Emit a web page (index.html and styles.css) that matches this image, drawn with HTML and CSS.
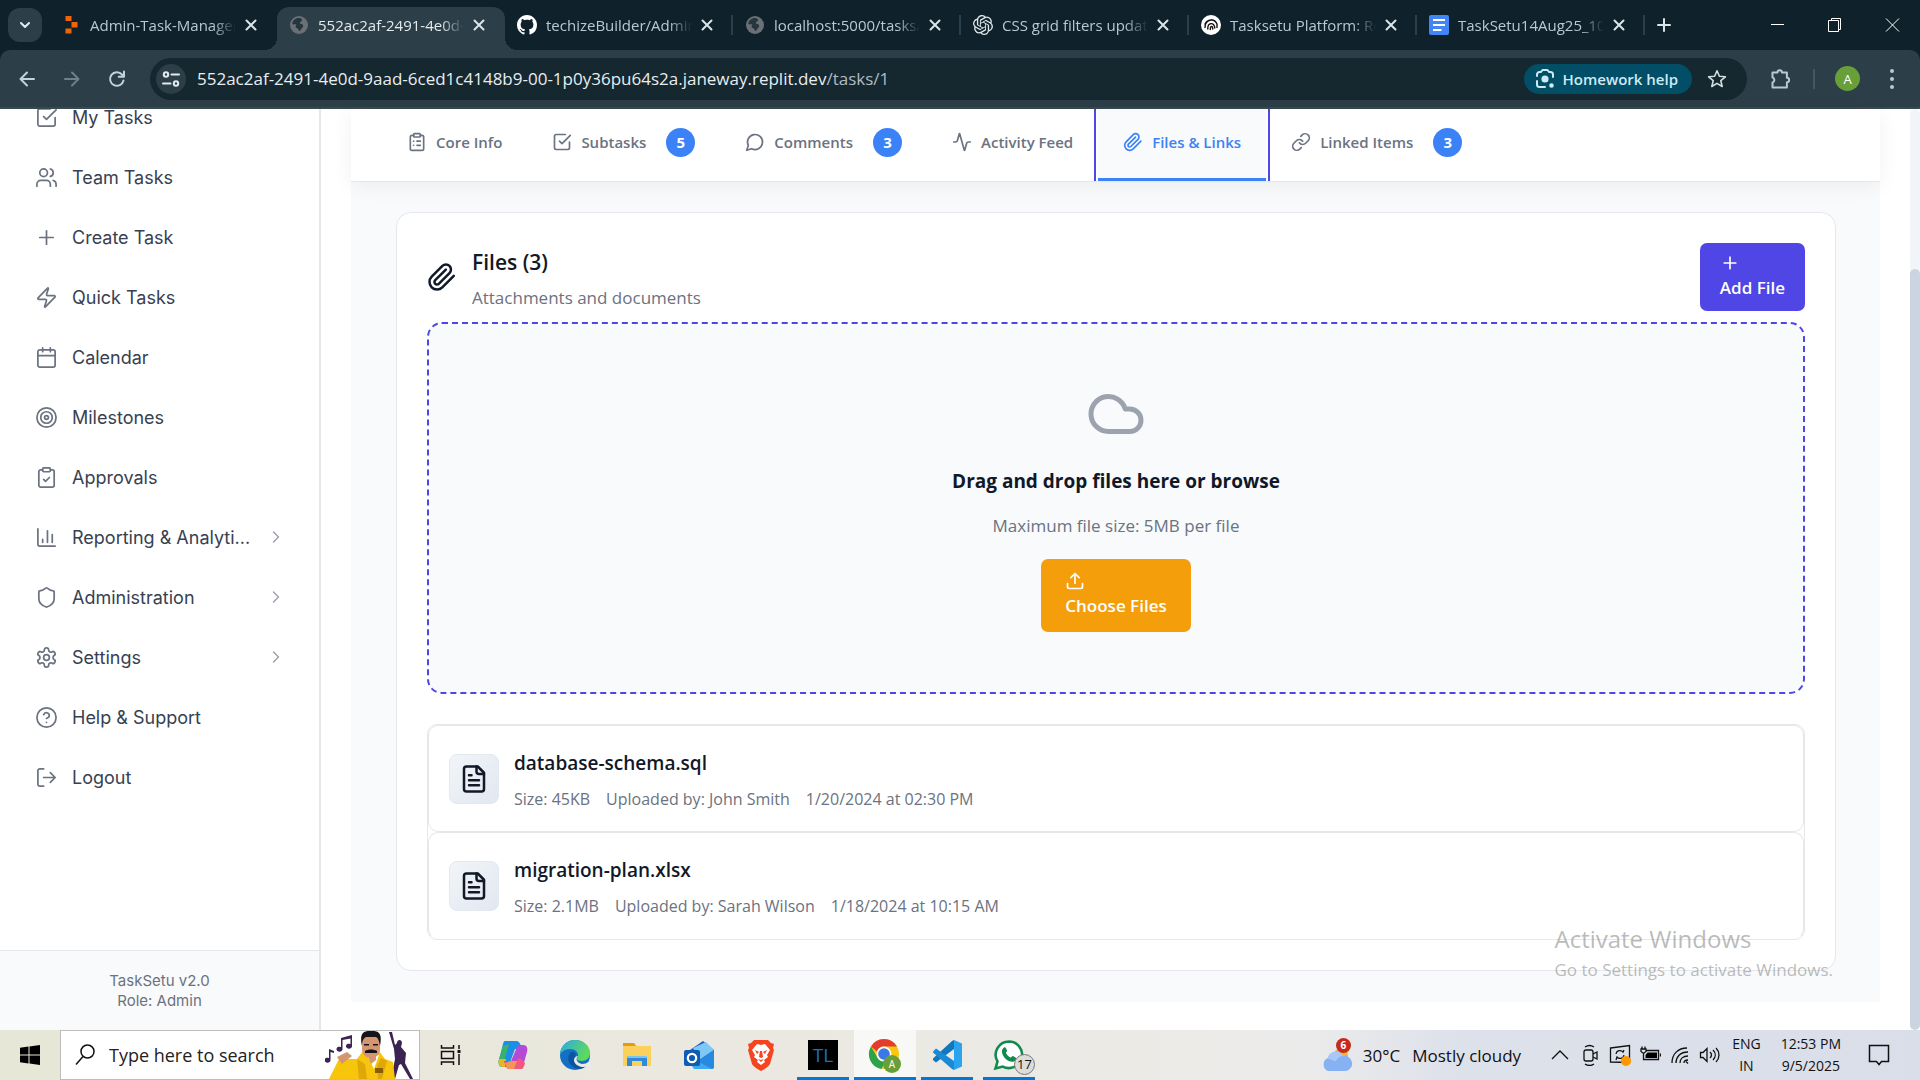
FILE: index.html
```html
<!DOCTYPE html>
<html lang="en">
<head>
<meta charset="utf-8">
<title>TaskSetu - Files &amp; Links</title>
<link rel="stylesheet" href="styles.css">
</head>
<body>
<svg class="sprite" aria-hidden="true">
  <symbol id="i-close" viewBox="0 0 16 16"><path d="M3.500 3.500l9 9M12.500 3.500l-9 9"/></symbol>
  <symbol id="i-globe" viewBox="0 0 20 20"><circle cx="10" cy="10" r="9" fill="#6b7075" stroke="none"/><path fill="#26363e" stroke="none" d="M10 3c2 0 3.500 1 3 2.500-.5 1.300-2 1-2.200 2.200-.2 1.100 1.700 1 2.700 1.800 1.200 1 .7 2.700-.5 3.500-1 .6-1 2.500-2.500 3-1 .2-.8-1.500-1.500-2.300-.6-.8-2.500-.7-2.500-2 0-1.200 1-1.500.5-2.200-.7-.7-2.500.5-3.700-.5C3.500 5.500 6.500 3 10 3z"/></symbol>
  <symbol id="i-check-square" viewBox="0 0 24 24"><path d="m9 11 3 3L22 4"/><path d="M21 12v7a2 2 0 0 1-2 2H5a2 2 0 0 1-2-2V5a2 2 0 0 1 2-2h11"/></symbol>
  <symbol id="i-users" viewBox="0 0 24 24"><path d="M16 21v-2a4 4 0 0 0-4-4H6a4 4 0 0 0-4 4v2"/><circle cx="9" cy="7" r="4"/><path d="M22 21v-2a4 4 0 0 0-3-3.870M16 3.130a4 4 0 0 1 0 7.750"/></symbol>
  <symbol id="i-plus" viewBox="0 0 24 24"><path d="M5 12h14M12 5v14"/></symbol>
  <symbol id="i-zap" viewBox="0 0 24 24"><path d="M4 14a1 1 0 0 1-.78-1.630l9.900-10.200a.5.5 0 0 1 .86.460l-1.920 6.020A1 1 0 0 0 13 10h7a1 1 0 0 1 .78 1.630l-9.900 10.200a.5.5 0 0 1-.86-.46l1.920-6.020A1 1 0 0 0 11 14z"/></symbol>
  <symbol id="i-calendar" viewBox="0 0 24 24"><rect x="3" y="4" width="18" height="18" rx="2"/><path d="M8 2v4M16 2v4M3 10h18"/></symbol>
  <symbol id="i-target" viewBox="0 0 24 24"><circle cx="12" cy="12" r="10"/><circle cx="12" cy="12" r="6"/><circle cx="12" cy="12" r="2"/></symbol>
  <symbol id="i-clip-check" viewBox="0 0 24 24"><rect x="8" y="2" width="8" height="4" rx="1"/><path d="M16 4h2a2 2 0 0 1 2 2v14a2 2 0 0 1-2 2H6a2 2 0 0 1-2-2V6a2 2 0 0 1 2-2h2"/><path d="m9 14 2 2 4-4"/></symbol>
  <symbol id="i-clip-list" viewBox="0 0 24 24"><rect x="8" y="2" width="8" height="4" rx="1"/><path d="M16 4h2a2 2 0 0 1 2 2v14a2 2 0 0 1-2 2H6a2 2 0 0 1-2-2V6a2 2 0 0 1 2-2h2"/><path d="M12 11h4M12 16h4M8 11h.01M8 16h.01"/></symbol>
  <symbol id="i-chart" viewBox="0 0 24 24"><path d="M3 3v16a2 2 0 0 0 2 2h16"/><path d="M18 17V9M13 17V5M8 17v-3"/></symbol>
  <symbol id="i-shield" viewBox="0 0 24 24"><path d="M20 13c0 5-3.500 7.500-7.660 8.950a1 1 0 0 1-.67-.01C7.500 20.500 4 18 4 13V6a1 1 0 0 1 1-1c2 0 4.500-1.200 6.240-2.720a1.170 1.170 0 0 1 1.520 0C14.510 3.810 17 5 19 5a1 1 0 0 1 1 1z"/></symbol>
  <symbol id="i-gear" viewBox="0 0 24 24"><path d="M12.220 2h-.44a2 2 0 0 0-2 2v.18a2 2 0 0 1-1 1.730l-.43.25a2 2 0 0 1-2 0l-.15-.08a2 2 0 0 0-2.730.73l-.22.38a2 2 0 0 0 .73 2.730l.15.1a2 2 0 0 1 1 1.720v.51a2 2 0 0 1-1 1.740l-.15.09a2 2 0 0 0-.73 2.730l.22.38a2 2 0 0 0 2.730.73l.15-.08a2 2 0 0 1 2 0l.43.25a2 2 0 0 1 1 1.730V20a2 2 0 0 0 2 2h.44a2 2 0 0 0 2-2v-.18a2 2 0 0 1 1-1.730l.43-.25a2 2 0 0 1 2 0l.15.08a2 2 0 0 0 2.730-.73l.22-.39a2 2 0 0 0-.73-2.730l-.15-.08a2 2 0 0 1-1-1.740v-.5a2 2 0 0 1 1-1.740l.15-.09a2 2 0 0 0 .73-2.730l-.22-.38a2 2 0 0 0-2.730-.73l-.15.08a2 2 0 0 1-2 0l-.43-.25a2 2 0 0 1-1-1.730V4a2 2 0 0 0-2-2z"/><circle cx="12" cy="12" r="3"/></symbol>
  <symbol id="i-help" viewBox="0 0 24 24"><circle cx="12" cy="12" r="10"/><path d="M9.090 9a3 3 0 0 1 5.830 1c0 2-3 3-3 3M12 17h.01"/></symbol>
  <symbol id="i-logout" viewBox="0 0 24 24"><path d="M9 21H5a2 2 0 0 1-2-2V5a2 2 0 0 1 2-2h4M16 17l5-5-5-5M21 12H9"/></symbol>
  <symbol id="i-chevron" viewBox="0 0 24 24"><path d="m9 18 6-6-6-6"/></symbol>
  <symbol id="i-comment" viewBox="0 0 24 24"><path d="M7.900 20A9 9 0 1 0 4 16.100L2 22Z"/></symbol>
  <symbol id="i-activity" viewBox="0 0 24 24"><path d="M22 12h-2.480a2 2 0 0 0-1.930 1.460l-2.350 8.360a.25.25 0 0 1-.48 0L9.240 2.180a.25.25 0 0 0-.48 0l-2.350 8.360A2 2 0 0 1 4.490 12H2"/></symbol>
  <symbol id="i-paperclip" viewBox="0 0 24 24"><path d="m21.440 11.050-9.190 9.190a6 6 0 0 1-8.490-8.490l8.570-8.570A4 4 0 1 1 18 8.840l-8.590 8.570a2 2 0 0 1-2.830-2.830l8.490-8.480"/></symbol>
  <symbol id="i-link" viewBox="0 0 24 24"><path d="M10 13a5 5 0 0 0 7.540.54l3-3a5 5 0 0 0-7.070-7.070l-1.720 1.710"/><path d="M14 11a5 5 0 0 0-7.540-.54l-3 3a5 5 0 0 0 7.070 7.070l1.710-1.710"/></symbol>
  <symbol id="i-cloud" viewBox="0 0 24 24"><path d="M17.500 19H9a7 7 0 1 1 6.710-9h1.790a4.500 4.500 0 1 1 0 9Z"/></symbol>
  <symbol id="i-upload" viewBox="0 0 24 24"><path d="M21 15v4a2 2 0 0 1-2 2H5a2 2 0 0 1-2-2v-4M17 8l-5-5-5 5M12 3v12"/></symbol>
  <symbol id="i-file" viewBox="0 0 24 24"><path d="M15 2H6a2 2 0 0 0-2 2v16a2 2 0 0 0 2 2h12a2 2 0 0 0 2-2V7Z"/><path d="M14 2v4a2 2 0 0 0 2 2h4M10 9H8M16 13H8M16 17H8"/></symbol>
</svg>

<header class="browser">
  <div class="tabstrip">
    <button class="tab-search" aria-label="Search tabs"><svg class="line" width="20" height="20" viewBox="0 0 20 20"><path d="M6 8l4 4 4-4"/></svg></button>
    <div class="browser-tabs">
      <div class="btab">
        <svg class="fav" viewBox="0 0 20 20"><path fill="#f26207" d="M4.500 1h6v5h-6zM10.500 7h6v5.500h-6zM4.500 13.500h6v5h-6z"/></svg>
        <span class="btab-title">Admin-Task-Manager</span><button class="x" aria-label="Close tab"><svg class="line"><use href="#i-close"/></svg></button>
      </div>
      <div class="btab active">
        <svg class="fav"><use href="#i-globe"/></svg>
        <span class="btab-title">552ac2af-2491-4e0d-9aad</span><button class="x" aria-label="Close tab"><svg class="line"><use href="#i-close"/></svg></button>
      </div>
      <div class="btab split">
        <svg class="fav" viewBox="0 0 16 16"><path fill="#fff" d="M8 0C3.580 0 0 3.580 0 8c0 3.540 2.290 6.530 5.470 7.590.4.070.55-.17.55-.38 0-.19-.01-.82-.01-1.490-2.010.37-2.530-.49-2.690-.94-.09-.23-.48-.94-.82-1.130-.28-.15-.68-.52-.01-.53.630-.01 1.080.58 1.230.82.72 1.210 1.870.87 2.330.66.070-.52.28-.87.51-1.070-1.780-.2-3.640-.89-3.640-3.950 0-.87.31-1.590.82-2.150-.08-.2-.36-1.020.08-2.120 0 0 .67-.21 2.200.82.64-.18 1.320-.27 2-.27s1.360.09 2 .27c1.530-1.040 2.200-.82 2.200-.82.44 1.100.16 1.920.08 2.120.51.56.82 1.270.82 2.150 0 3.070-1.870 3.750-3.650 3.950.29.25.54.73.54 1.480 0 1.070-.01 1.930-.01 2.200 0 .21.15.46.55.38A8.010 8.010 0 0 0 16 8c0-4.420-3.580-8-8-8z"/></svg>
        <span class="btab-title">techizeBuilder/Admin-Task</span><button class="x" aria-label="Close tab"><svg class="line"><use href="#i-close"/></svg></button>
      </div>
      <div class="btab split">
        <svg class="fav"><use href="#i-globe"/></svg>
        <span class="btab-title">localhost:5000/tasks/1</span><button class="x" aria-label="Close tab"><svg class="line"><use href="#i-close"/></svg></button>
      </div>
      <div class="btab split">
        <svg class="fav" viewBox="0 0 24 24"><path fill="#dfe7ea" d="M22.280 9.820a5.980 5.980 0 0 0-.52-4.910 6.050 6.050 0 0 0-6.510-2.900A6.070 6.070 0 0 0 4.980 4.180a5.980 5.980 0 0 0-4 2.900 6.050 6.050 0 0 0 .74 7.100 5.980 5.980 0 0 0 .51 4.910 6.050 6.050 0 0 0 6.520 2.900A5.980 5.980 0 0 0 13.260 24a6.060 6.060 0 0 0 5.770-4.210 5.990 5.990 0 0 0 4-2.900 6.060 6.060 0 0 0-.75-7.070zm-9.020 12.610a4.480 4.480 0 0 1-2.880-1.040l.14-.08 4.780-2.760a.8.8 0 0 0 .39-.68v-6.740l2.020 1.170.04.05v5.580a4.500 4.500 0 0 1-4.490 4.500zM3.600 18.300a4.470 4.470 0 0 1-.54-3.010l.14.08 4.780 2.760a.77.77 0 0 0 .78 0l5.840-3.370v2.330l-.03.06-4.830 2.790A4.500 4.500 0 0 1 3.600 18.300zM2.340 7.900a4.490 4.490 0 0 1 2.370-1.980v5.680a.77.77 0 0 0 .39.68l5.810 3.350-2.020 1.170h-.07L4 14.010A4.500 4.500 0 0 1 2.340 7.900zm16.600 3.860-5.840-3.390 2.020-1.160h.07l4.830 2.790a4.490 4.490 0 0 1-.68 8.100v-5.680a.79.79 0 0 0-.4-.66zm2.010-3.020-.14-.09-4.770-2.780a.78.78 0 0 0-.79 0L9.410 9.230V6.900l.03-.06 4.830-2.790a4.500 4.500 0 0 1 6.680 4.690zM8.310 12.860l-2.020-1.160-.04-.06V6.070a4.500 4.500 0 0 1 7.380-3.450l-.14.08L8.700 5.460a.8.8 0 0 0-.39.68zm1.100-2.360L12 9l2.610 1.500v3L12 15l-2.600-1.500z"/></svg>
        <span class="btab-title">CSS grid filters update</span><button class="x" aria-label="Close tab"><svg class="line"><use href="#i-close"/></svg></button>
      </div>
      <div class="btab split">
        <svg class="fav" viewBox="0 0 20 20"><circle cx="10" cy="10" r="10" fill="#fff"/><g fill="none" stroke="#111" stroke-width="1.400" stroke-linecap="round"><path d="M4 12.500c0-8 9-10 12-3.500v3.500M6.800 14c-.3-6.500 6.500-7.500 7-1M9.300 14.500c0-4 2.500-4 2.500-.5M4 9c1.500-3.500 5.500-5 9-3.500"/></g></svg>
        <span class="btab-title">Tasksetu Platform: Review</span><button class="x" aria-label="Close tab"><svg class="line"><use href="#i-close"/></svg></button>
      </div>
      <div class="btab split">
        <svg class="fav" viewBox="0 0 20 20"><rect width="20" height="20" rx="2" fill="#4285f4"/><path stroke="#fff" stroke-width="2" d="M4 5h12M4 10h12M4 15h8.500"/></svg>
        <span class="btab-title">TaskSetu14Aug25_10.docx</span><button class="x" aria-label="Close tab"><svg class="line"><use href="#i-close"/></svg></button>
      </div>
    </div>
    <button class="new-tab" aria-label="New tab"><svg class="line" width="20" height="20" viewBox="0 0 20 20"><path d="M10 4v12M4 10h12"/></svg></button>
    <div class="window-buttons">
      <button aria-label="Minimize"><svg width="16" height="16" viewBox="0 0 16 16"><path d="M1 7.500h13"/></svg></button>
      <button aria-label="Restore"><svg width="16" height="16" viewBox="0 0 16 16"><path d="M1.500 3.500h10v11h-10zM4.500 3V1.500h9v11H12"/></svg></button>
      <button aria-label="Close"><svg width="16" height="16" viewBox="0 0 16 16"><path d="M2 1.500l13 13M15 1.500l-13 13"/></svg></button>
    </div>
  </div>
  <div class="toolbar">
    <div class="nav-buttons">
      <button aria-label="Back"><svg class="line" width="20" height="20" viewBox="0 0 20 20"><path d="M17 10H3.500M10 3.500 3.500 10l6.500 6.500"/></svg></button>
      <button class="dim" aria-label="Forward"><svg class="line" width="20" height="20" viewBox="0 0 20 20"><path d="M3 10h13.500M10 3.500l6.500 6.500-6.500 6.500"/></svg></button>
      <button aria-label="Reload"><svg class="line" width="20" height="20" viewBox="0 0 20 20"><path d="M16.500 11.500A6.800 6.800 0 1 1 15 5.500l2 2M17 2.500v5.300h-5.300"/></svg></button>
    </div>
    <div class="omnibox">
      <button class="site-info" aria-label="Site information"><svg class="line" width="20" height="20" viewBox="0 0 20 20"><circle cx="5" cy="5.500" r="2.200"/><path d="M10.500 5.500H18M2 14.500h7.500"/><circle cx="15" cy="14.500" r="2.200"/></svg></button>
      <div class="url" role="textbox" aria-label="Address">552ac2af-2491-4e0d-9aad-6ced1c4148b9-00-1p0y36pu64s2a.janeway.replit.dev<span>/tasks/1</span></div>
      <button class="homework"><svg class="line" width="20" height="20" viewBox="0 0 20 20"><path d="M2 7V5.500A2.500 2.500 0 0 1 4.500 3H6l1.500-2h5L14 3h1.500A2.500 2.500 0 0 1 18 5.500V8M2 12v3.500A2.500 2.500 0 0 0 4.500 18H10"/><circle cx="10" cy="10" r="2.600" fill="currentColor"/><circle cx="16.500" cy="16.500" r="1.300" fill="currentColor"/></svg>Homework help</button>
      <button class="star" aria-label="Bookmark"><svg class="line" width="20" height="20" viewBox="0 0 20 20"><path d="m10 1.800 2.400 5.500 6 .5-4.600 3.900 1.400 5.800-5.200-3.100-5.200 3.100 1.400-5.800L1.600 7.800l6-.5z"/></svg></button>
    </div>
    <div class="toolbar-end">
      <button aria-label="Extensions"><svg class="line" width="24" height="24" viewBox="0 0 24 24"><path d="M3.500 5.500h5a2.200 2.200 0 0 1 4.400 0h5v5.300a2.200 2.200 0 0 1 0 4.400v5.300H3.500v-5a2.600 2.600 0 0 0 0-5z"/></svg></button>
      <span class="divider"></span>
      <button class="avatar" aria-label="Profile">A</button>
      <button aria-label="Menu"><svg width="20" height="24" viewBox="0 0 20 24" fill="currentColor"><circle cx="10" cy="4" r="2"/><circle cx="10" cy="12" r="2"/><circle cx="10" cy="20" r="2"/></svg></button>
    </div>
  </div>
</header>

<div class="page">
  <aside class="sidebar">
    <nav class="side-nav">
      <a href="#"><svg class="line"><use href="#i-check-square"/></svg><span>My Tasks</span></a>
      <a href="#"><svg class="line"><use href="#i-users"/></svg><span>Team Tasks</span></a>
      <a href="#"><svg class="line"><use href="#i-plus"/></svg><span>Create Task</span></a>
      <a href="#"><svg class="line"><use href="#i-zap"/></svg><span>Quick Tasks</span></a>
      <a href="#"><svg class="line"><use href="#i-calendar"/></svg><span>Calendar</span></a>
      <a href="#"><svg class="line"><use href="#i-target"/></svg><span>Milestones</span></a>
      <a href="#"><svg class="line"><use href="#i-clip-check"/></svg><span>Approvals</span></a>
      <a href="#"><svg class="line"><use href="#i-chart"/></svg><span>Reporting &amp; Analyti...</span><svg class="line chev"><use href="#i-chevron"/></svg></a>
      <a href="#"><svg class="line"><use href="#i-shield"/></svg><span>Administration</span><svg class="line chev"><use href="#i-chevron"/></svg></a>
      <a href="#"><svg class="line"><use href="#i-gear"/></svg><span>Settings</span><svg class="line chev"><use href="#i-chevron"/></svg></a>
      <a href="#"><svg class="line"><use href="#i-help"/></svg><span>Help &amp; Support</span></a>
      <a href="#"><svg class="line"><use href="#i-logout"/></svg><span>Logout</span></a>
    </nav>
    <div class="side-foot">TaskSetu v2.0<br>Role: Admin</div>
  </aside>

  <main class="content">
    <div class="panel">
      <div class="tabbar-wrap"><div class="tabbar">
        <button class="tab"><svg class="line"><use href="#i-clip-list"/></svg>Core Info</button>
        <button class="tab"><svg class="line"><use href="#i-check-square"/></svg>Subtasks<span class="count">5</span></button>
        <button class="tab"><svg class="line"><use href="#i-comment"/></svg>Comments<span class="count">3</span></button>
        <button class="tab"><svg class="line"><use href="#i-activity"/></svg>Activity Feed</button>
        <button class="tab current"><svg class="line"><use href="#i-paperclip"/></svg>Files &amp; Links</button>
        <button class="tab"><svg class="line"><use href="#i-link"/></svg>Linked Items<span class="count">3</span></button>
      </div></div>

      <section class="card">
        <div class="card-head">
          <svg class="line"><use href="#i-paperclip"/></svg>
          <div class="card-title">
            <h2>Files (3)</h2>
            <p>Attachments and documents</p>
          </div>
          <button class="btn add"><svg class="line"><use href="#i-plus"/></svg>Add File</button>
        </div>
        <div class="dropzone">
          <svg class="line cloud"><use href="#i-cloud"/></svg>
          <h3>Drag and drop files here or browse</h3>
          <p>Maximum file size: 5MB per file</p>
          <button class="btn choose"><svg class="line"><use href="#i-upload"/></svg>Choose Files</button>
        </div>
        <ul class="files">
          <li>
            <div class="tile"><svg class="line"><use href="#i-file"/></svg></div>
            <div class="file-text">
              <h4>database-schema.sql</h4>
              <div class="meta"><span>Size: 45KB</span><span>Uploaded by: John Smith</span><span>1/20/2024 at 02:30 PM</span></div>
            </div>
          </li>
          <li>
            <div class="tile"><svg class="line"><use href="#i-file"/></svg></div>
            <div class="file-text">
              <h4>migration-plan.xlsx</h4>
              <div class="meta"><span>Size: 2.1MB</span><span>Uploaded by: Sarah Wilson</span><span>1/18/2024 at 10:15 AM</span></div>
            </div>
          </li>
        </ul>
      </section>
    </div>
  </main>
  <div class="scrollbar"><div class="thumb"></div></div>

  <div class="watermark"><strong>Activate Windows</strong><span>Go to Settings to activate Windows.</span></div>
</div>

<footer class="taskbar">
  <button class="start" aria-label="Start"><svg width="20" height="20" viewBox="0 0 20 20"><path d="M0 2.800 8.500 1.600v7.900H0zM9.500 1.450 20 0v9.500H9.500zM0 10.500h8.500v7.900L0 17.200zM9.500 10.500H20V20L9.500 18.550z"/></svg></button>
  <div class="search">
    <svg width="20" height="22" viewBox="0 0 20 22" fill="none" stroke="#111" stroke-width="1.500"><circle cx="12.500" cy="7.500" r="6.500"/><path d="M8 12.500 1 20.500"/></svg>
    <input type="text" aria-label="Search" placeholder="Type here to search">
    <svg class="art" width="92" height="48" viewBox="0 0 92 48">
      <g fill="#3b2352"><path d="M16 7l11-3v11a3 2.500 0 1 1-1.500-2V7.500L17.500 9v9a3 2.500 0 1 1-1.500-2zM4 18l5 2v2l-3.500-1v8a3 2.500 0 1 1-1.500-2z"/><path d="M64 1l3 0 3 13 2-2c0-4 5-4 5 0l-1 4 5 6-1 10 8 16h-3l-9-15-2 1-4 14h-4l4-20-1-10z"/></g>
      <path fill="#f7c60c" d="M4 48l10-20 18 0 6-8h16l6 8 8 3 2 17z"/>
      <path fill="#c98f05" d="M32 28l8 5 2 15h-8zM56 27l-4 8 1 13h4l5-18z" opacity=".55"/>
      <path fill="#fff" d="M42 24h12l-5 14z"/>
      <path fill="#d39670" d="M37 10c0-7 18-7 18 0v8c0 12-18 12-18 0z"/>
      <path fill="#d39670" d="M12 26l10-5 5 4-10 8zM42 23h9v6l-5 4z"/>
      <path fill="#17131a" d="M37 15C34 0 40 0 46 0s12 0 9 15c-1-6-2-8-4-9H41c-2 1-4 3-4 9zM40 20c3-2 9-2 12 0v2H40zM39 13h5v1.500h-5zM48 13h5v1.500h-5z"/>
      <path fill="#8a5b05" d="M50 37h8v5h-8z"/>
    </svg>
  </div>
  <div class="apps">
    <button aria-label="Task View"><svg width="22" height="22" viewBox="0 0 22 22" fill="none" stroke="#111" stroke-width="1.500"><path d="M1.500 1v3h12V1M1.500 7.500h12v7h-12zM1.500 21v-3h12v3M19 1v4M19 10v11"/><path d="M17.500 7.500h3" stroke-width="3"/></svg></button>
    <button aria-label="Copilot"><svg width="32" height="32" viewBox="0 0 32 32">
      <path fill="#1a8fe3" d="M8 2h11c3 0 4 2 5 5l1 3h-7l-6 16c-1 2-2 2-4 2H6c-4 0-5-3-4-7L6 5c.5-2 1-3 2-3z"/><path fill="#39b36b" d="M2 20l4-13 6-2-5 17c-1 3 0 5 1 6H6c-4 0-5-4-4-8z"/><path fill="#e8b720" d="M2 20h7l-1 8H6c-4 0-5-4-4-8z"/><path fill="#b34bd6" d="M24 30H13c-3 0-4-2-5-5l-1-3h7l6-14c1-2 2-2 4-2h2c4 0 5 3 4 7l-4 14c-.5 2-1 3-2 3z"/><path fill="#f4577d" d="M24 30H13c-3 0-4-2-5-6h8l7-5 5 5c-1 4-2 6-4 6z"/><path fill="#f59455" d="M14 22h6l-3 8h-4c-3 0-4-2-5-6z"/></svg></button>
    <button aria-label="Edge"><svg width="32" height="32" viewBox="0 0 32 32">
      <defs><linearGradient id="edge" x1="0" y1="0" x2="1" y2=".4"><stop offset="0" stop-color="#2aa9e8"/><stop offset="1" stop-color="#5fd95c"/></linearGradient></defs>
      <circle cx="16" cy="16" r="15" fill="#1470c4"/><path fill="url(#edge)" d="M1 16C1 7 8 1 16 1c9 0 15 6 15 13 0 5-4 8-8 8-3 0-5-1-5-2s1-1 1-4c0-3-3-6-8-6-5 0-9 3-10 6z"/><path fill="#0c55a0" d="M12 13c-4 4-4 12 4 16 4 2 9 1 12-3-6 3-13 0-13-6 0-2 1-3 2-4 0-2-3-4-5-3z"/><path fill="#eceae4" d="M19 17c-3 3-1 7 4 8 3 0 5-1 6-2 1 1 1 1 3-1v10h-6c2-2 3-4 3-5-6 3-14-1-14-6 0-2 2-4 4-4z"/></svg></button>
    <button aria-label="File Explorer"><svg width="32" height="32" viewBox="0 0 32 32"><path fill="#e59a10" d="M2 4h11l3 4H2z"/><path fill="#fbd15b" d="M2 7h28v20H2z"/><path fill="#2f8ad8" d="M6 17h20v10h-5v-5H11v5H6z"/><path fill="#7cc3f2" d="M6 17h20v2H6z"/></svg></button>
    <button aria-label="Outlook"><svg width="32" height="32" viewBox="0 0 32 32"><path fill="#1d5ec0" d="M7 11 20 2l11 9v13H7z"/><path fill="#7cc9f7" d="M10 9l13-6 8 8-14 10z"/><path fill="#3fa9f0" d="M31 11v17c0 1-1 2-2 2H11l-2-3z"/><path fill="#1c78d8" d="M31 11 14 22l15 8c1 0 2-1 2-2z" opacity=".65"/><rect x="1" y="11" width="16" height="16" rx="2" fill="#0f5cb4"/><circle cx="9" cy="19" r="4.200" fill="none" stroke="#fff" stroke-width="2.200"/></svg></button>
    <button aria-label="Brave"><svg width="28" height="32" viewBox="0 0 28 32"><path fill="#f4451f" d="M7 1h14l3 3 3 1-1 4 1 2-4 14c-1 2-5 5-9 7-4-2-8-5-9-7L1 11l1-2-1-4 3-1z"/><path fill="#fff" d="M14 6l4-1 5 6-3 5 1 2-4 3 1 2-4 3-4-3 1-2-4-3 1-2-3-5 5-6z"/><path fill="#f4451f" d="M8 11l4 2-2 2zM20 11l-4 2 2 2zM13 12h2l1 6-2 1-2-1zM11 20l3 1 3-1-3 3z"/></svg></button>
    <button class="open" aria-label="TL"><span class="tl">TL</span></button>
    <button class="open front" aria-label="Chrome"><svg width="34" height="34" viewBox="0 0 34 34"><circle cx="16" cy="16" r="15" fill="#f9c80e"/><path fill="#e33b2e" d="M3 8.500A15 15 0 0 1 29 8.500H16a7.500 7.500 0 0 0-7 5z"/><path fill="#2ba24c" d="M3 8.500 9.600 20A7.500 7.500 0 0 0 17 23.400L13.500 31A15 15 0 0 1 3 8.500z"/><circle cx="16" cy="16" r="7.500" fill="#fff"/><circle cx="16" cy="16" r="5.800" fill="#3b78e7"/></svg><span class="pf">A</span></button>
    <button class="open" aria-label="Visual Studio Code"><svg width="32" height="32" viewBox="0 0 32 32"><path fill="#1277bd" fill-rule="evenodd" d="M23 1v9L5 23.500l-3-2.500v-1.500L21 2z"/><path fill="#1a8ad4" d="M2 12.500 5 9.500 23 22v9l-2-1L2 13.500z"/><path fill="#2ba3ef" d="M23 1l8 3.500v23L23 31z"/></svg></button>
    <button class="open" aria-label="WhatsApp"><svg width="32" height="32" viewBox="0 0 32 32"><path fill="#fff" stroke="#118a4e" stroke-width="2.600" d="M16 2.500A13.300 13.300 0 0 0 4.500 22.500L2.500 29.500l7.200-1.900A13.300 13.300 0 1 0 16 2.500z"/><path fill="#118a4e" d="M11 8.500c1-.6 1.700 0 2 .8l1 2.200c.3 1-1.200 1.700-1 2.500 1 2 2.500 3.500 4.500 4.500.8.300 1.500-1.700 2.500-1.400l2.500 1.300c1 .5.600 2 0 2.800-2.500 3-7 1.300-10-1.500-3-3-5.500-8.500-1.500-11.200z"/></svg><span class="wa">17</span></button>
  </div>
  <div class="tray">
    <div class="weather">
      <svg width="32" height="26" viewBox="0 0 32 26"><circle cx="20" cy="9" r="7" fill="#f7b436"/><path fill="#86b1f2" d="M7 25a7 7 0 0 1 0-13 8 8 0 0 1 15-2 7 7 0 0 1 3 15z"/><path fill="#a9c8fa" d="M7 13a8 8 0 0 1 15-3c-5 0-6 5-8 5s-3-2-7-2z"/></svg>
      <b>6</b>
    </div>
    <span class="temp">30°C</span><span class="sky">Mostly cloudy</span>
    <div class="tray-icons">
      <svg viewBox="0 0 22 22"><path d="M3 15l8-8 8 8"/></svg>
      <svg viewBox="0 0 22 22"><rect x="5" y="6" width="9" height="11" rx="2"/><path d="M14 10l4-2v7l-4-2M6 3c3-2 6-2 9 0M6 20c3 2 6 2 9 0"/></svg>
      <svg viewBox="0 0 22 22"><path d="M1.500 4 20.500 1.500v17L1.500 18zM7 10a4 4 0 0 1 7-2l1-2M15 11a4 4 0 0 1-7 2l-1 3"/><circle cx="17" cy="17" r="5" fill="#ff9800" stroke="none"/></svg>
      <svg viewBox="0 0 22 22"><path d="M4.500 9v6.500H19.500V6.500H7M2 5h5v2.500L4.500 9.500 2 7.500zM3 5V2.500M6 5V2.500M21.500 9.500v3"/><path fill="#000" stroke="none" d="M8.500 8.500H18v5.500H6.500V11z"/></svg>
      <svg viewBox="0 0 22 22"><path d="M3 19C3 10 9 4 18 4M7 19c0-6 4-11 12-11M11 19c0-4 3-7 8-7" /><path d="M15 19c0-2 2-3 4-3M17 17.500l2 2"/></svg>
      <svg viewBox="0 0 22 22"><path d="M1.500 8.500H4l4-4v13l-4-4H1.500zM11 8c2 2 2 4 0 6M14 6c3 3 3 7 0 10M17 4c4 4 4 10 0 14"/></svg>
    </div>
    <div class="stack lang"><span>ENG</span><span>IN</span></div>
    <div class="stack"><span>12:53 PM</span><span>9/5/2025</span></div>
    <svg class="note" width="22" height="22" viewBox="0 0 22 22"><path d="M1.500 1.500h19v16h-7L11 20.500 8.500 17.500h-7z"/></svg>
  </div>
</footer>
</body>
</html>
```

FILE: styles.css
```css
* { box-sizing: border-box; }

body {
  margin: 0;
  height: 100vh;
  display: flex;
  flex-direction: column;
  overflow: hidden;
  background: #fff;
  color: #111827;
  font-family: "Open Sans", "Noto Sans", sans-serif;
  font-size: 16px;
}

button {
  margin: 0;
  padding: 0;
  border: 0;
  background: none;
  color: inherit;
  font: inherit;
}

h2, h3, h4, p, ul { margin: 0; padding: 0; }
svg { display: block; flex: none; }
.sprite { display: none; }

.line {
  fill: none;
  stroke: currentColor;
  stroke-width: 2;
  stroke-linecap: round;
  stroke-linejoin: round;
}

/* Browser window */
.browser { flex: none; background: #0f222b; color: #b7c9d1; }

.tabstrip { display: flex; height: 50px; align-items: center; }

.tab-search {
  width: 34px;
  height: 34px;
  margin: 0 7px 0 8px;
  padding: 7px;
  border-radius: 12px;
  background: #2c3e47;
  color: #e4ecef;
}

.browser-tabs { display: flex; flex: 0 1 1596px; align-self: stretch; min-width: 0; }

.btab {
  flex: 1 1 0;
  min-width: 0;
  display: flex;
  align-items: center;
  padding: 0 18px 0 12px;
  position: relative;
  font-size: 15px;
}

.btab.active {
  margin: 7px 0 0;
  padding-bottom: 7px;
  background: #2c3e47;
  border-radius: 12px 12px 0 0;
  color: #e2eaed;
}

.btab.active::before,
.btab.active::after {
  content: "";
  position: absolute;
  bottom: 0;
  width: 12px;
  height: 12px;
}
.btab.active::before { left: -12px; background: radial-gradient(circle at 0 0, transparent 12px, #2c3e47 12px); }
.btab.active::after { right: -12px; background: radial-gradient(circle at 100% 0, transparent 12px, #2c3e47 12px); }

.btab.split { background: linear-gradient(#2c3e47, #2c3e47) right center / 2px 20px no-repeat; }

.fav { width: 20px; height: 20px; }

.btab-title {
  flex: 1;
  min-width: 0;
  margin: 0 7px 0 9px;
  overflow: hidden;
  white-space: nowrap;
  -webkit-mask-image: linear-gradient(90deg, #000 84%, transparent);
  mask-image: linear-gradient(90deg, #000 84%, transparent);
}

.x svg { width: 16px; height: 16px; color: #dbe5e9; }

.new-tab { margin-left: 9px; color: #dbe5e9; }

.window-buttons { display: flex; margin-left: auto; }
.window-buttons button { width: 57px; display: flex; justify-content: center; }
.window-buttons svg { fill: none; stroke: #fff; stroke-width: 1; }

.toolbar {
  display: flex;
  align-items: center;
  height: 59px;
  padding: 0 18px 0 17px;
  background: #2c3e47;
  border-radius: 10px 10px 0 0;
  border-bottom: 2px solid #3c484f;
}

.nav-buttons { display: flex; gap: 25px; margin-right: 23px; color: #c3d3da; }
.nav-buttons .dim { color: #70808a; }

.omnibox {
  flex: 1;
  min-width: 0;
  height: 42px;
  display: flex;
  align-items: center;
  padding: 0 20px 0 6px;
  border-radius: 21px;
  background: #15272f;
}

.site-info {
  width: 30px;
  height: 30px;
  padding: 5px;
  border-radius: 15px;
  background: #2c3e47;
  color: #e2eaed;
}

.url {
  flex: 1;
  min-width: 0;
  margin-left: 11px;
  overflow: hidden;
  white-space: nowrap;
  font-size: 17px;
  color: #e8eef0;
}
.url span { color: #aebdc4; }

.homework {
  display: flex;
  align-items: center;
  gap: 8px;
  height: 30px;
  padding: 0 14px 0 11px;
  border-radius: 15px;
  background: #024e66;
  color: #cdeaf5;
  font-size: 15px;
  font-weight: 600;
}

.star { margin-left: 15px; color: #d3dee2; }
.star svg { stroke-width: 1.600; }

.toolbar-end { display: flex; align-items: center; margin-left: 22px; color: #b7c9d1; }
.divider { width: 2px; height: 20px; margin: 0 20px; background: #46565f; }

.avatar {
  width: 25px;
  height: 25px;
  margin-right: 22px;
  border-radius: 50%;
  background: #689f38;
  color: #fff;
  font-size: 13px;
}

/* Application */
.page { position: relative; flex: 1; min-height: 0; display: flex; }

.sidebar {
  flex: none;
  width: 321px;
  display: flex;
  flex-direction: column;
  overflow: hidden;
  border-right: 2px solid #e5e7eb;
  font-family: Inter, "Liberation Sans", sans-serif;
}

.side-nav { flex: 1; min-height: 0; margin-top: -22px; }

.side-nav a {
  display: flex;
  align-items: center;
  gap: 14px;
  height: 60px;
  padding: 0 33px 0 35px;
  color: #374151;
  font-size: 18px;
  font-weight: 400;
  text-decoration: none;
}
.side-nav a > span {
  flex: 1;
  min-width: 0;
  overflow: hidden;
  text-overflow: ellipsis;
  white-space: nowrap;
}
.side-nav svg { width: 23px; height: 23px; color: #6b7280; stroke-width: 1.800; }
.side-nav .chev { width: 20px; height: 20px; color: #9ca3af; }

.side-foot {
  flex: none;
  padding: 20px 0 19px;
  border-top: 1px solid #e5e7eb;
  background: #f9fafb;
  color: #6b7280;
  font-size: 15px;
  line-height: 20px;
  text-align: center;
}

.content { flex: 1; min-width: 0; padding: 0 30px; }

.panel { padding-bottom: 31px; background: #f8fafc; }

.tabbar-wrap {
  background: #fff;
  border-bottom: 1px solid #e5e7eb;
  box-shadow: 0 4px 20px rgba(0, 0, 0, .06);
}

.tabbar {
  display: flex;
  align-items: flex-end;
  height: 72px;
  padding: 0 31px;
  overflow: hidden;
}

.tab {
  flex: none;
  display: flex;
  align-items: center;
  gap: 9px;
  height: 78px;
  padding: 0 25px;
  color: #6b7280;
  font-size: 15px;
  font-weight: 600;
}
.tab svg { width: 20px; height: 20px; }

.tab.current {
  background: #f8fafc;
  color: #3b82f6;
  box-shadow: inset 0 -3px #3b82f6;
  outline: 2px solid #4f46e5;
  outline-offset: 2px;
}

.count {
  width: 29px;
  height: 29px;
  margin-left: 11px;
  border-radius: 50%;
  background: #3b82f6;
  color: #fff;
  font-size: 15px;
  font-weight: 700;
  line-height: 29px;
  text-align: center;
}

.card {
  margin: 30px 44px 0 45px;
  padding: 30px;
  border: 1px solid #e5e7eb;
  border-radius: 15px;
  background: #fff;
}

.card-head { display: flex; align-items: center; gap: 15px; margin-bottom: 11px; }
.card-head > svg { width: 30px; height: 30px; }
.card-title { flex: 1; }
.card-title h2 { font-size: 21px; font-weight: 600; line-height: 38px; }
.card-title p { padding-top: 4px; font-size: 17px; line-height: 26px; color: #6b7280; }

.btn { color: #fff; font-size: 17px; font-weight: 600; line-height: 24px; text-align: left; border-radius: 7px; }
.btn svg { width: 20px; height: 20px; margin-bottom: 3px; }
.add { padding: 10px 20px 11px; background: #4f46e5; }
.choose { padding: 12px 24px 14px; background: #f59e0b; }

.dropzone {
  display: flex;
  flex-direction: column;
  align-items: center;
  padding: 60px 20px;
  border: 2px dashed #4f46e5;
  border-radius: 15px;
  background: #f8fafc;
}
.cloud { width: 60px; height: 60px; color: #9ca3af; }
.dropzone h3 { margin-top: 20px; font-size: 19px; font-weight: 700; line-height: 34px; }
.dropzone p { margin: 12px 0 17px; font-size: 17px; line-height: 32px; color: #6b7280; }

.files {
  margin-top: 30px;
  border: 1px solid #e5e7eb;
  border-radius: 10px;
  list-style: none;
}
.files li {
  display: flex;
  align-items: center;
  gap: 15px;
  padding: 20px;
  border: 1px solid #e5e7eb;
  border-radius: 10px;
}
.files li + li { border-bottom-color: #fff; }

.tile {
  width: 50px;
  height: 50px;
  padding: 9px;
  border: 1px solid #e2e8f0;
  border-radius: 8px;
  background: linear-gradient(135deg, #f1f5f9, #e2e8f0);
}
.tile svg { width: 30px; height: 30px; }

.file-text h4 { font-size: 19px; font-weight: 600; line-height: 34px; }
.meta { display: flex; gap: 16px; margin-top: 7px; color: #6b7280; font-size: 16px; line-height: 24px; }

.scrollbar { flex: none; width: 10px; padding-top: 160px; border-radius: 5px; background: #f1f5f9; }
.thumb { height: 100%; border-radius: 5px; background: #cbd5e1; }

.watermark {
  position: absolute;
  right: 87px;
  bottom: 46px;
  display: flex;
  flex-direction: column;
  color: rgba(120, 120, 120, .5);
  font-size: 17px;
  line-height: 28px;
}
.watermark strong { font-size: 24px; font-weight: 400; line-height: 34px; }

/* Windows taskbar */
.taskbar {
  flex: none;
  display: flex;
  height: 50px;
  background: linear-gradient(90deg, #e6e7d6, #eae8de 30%, #ebeae6 60%, #ebebeb 68%, #dde1ea 76%, #d9dee9);
  color: #111;
}

.start { width: 60px; display: flex; align-items: center; justify-content: center; }

.search {
  flex: none;
  width: 360px;
  display: flex;
  align-items: center;
  padding: 0 2px 0 14px;
  border: 1px solid #bdbdbd;
  background: #fff;
}
.search input {
  flex: 1;
  min-width: 0;
  margin-left: 14px;
  padding: 0;
  border: 0;
  background: none;
  font: 18px "Open Sans", sans-serif;
}
.search input::placeholder { color: #222; opacity: 1; }

.apps { display: flex; }
.apps button {
  position: relative;
  width: 62px;
  display: flex;
  align-items: center;
  justify-content: center;
}
.apps .open::after {
  content: "";
  position: absolute;
  left: 5px;
  right: 5px;
  bottom: 0;
  height: 3px;
  background: #0078d7;
}
.apps .front { background: #f8f8f6; }
.apps .front::after { left: 0; right: 0; }

.tl {
  width: 30px;
  height: 30px;
  background: #000;
  color: #1b6fc0;
  font-size: 19px;
  line-height: 30px;
}

.pf, .wa, .weather b { position: absolute; border-radius: 50%; text-align: center; }
.pf { left: 29px; top: 25px; width: 18px; height: 18px; background: #689f38; color: #fff; font-size: 10px; line-height: 18px; }
.wa { left: 36px; top: 24px; width: 21px; height: 21px; border: 1px solid #777; background: #dcdcdc; font-size: 13px; line-height: 19px; }

.tray { display: flex; align-items: center; margin-left: auto; padding-right: 30px; font-size: 15px; }
.weather { position: relative; padding-top: 8px; margin-right: 10px; }
.weather b { left: 15px; top: 0; width: 15px; height: 15px; background: #c42b1c; color: #fff; font-size: 10px; line-height: 15px; }
.temp, .sky { font-size: 17px; }
.sky { margin: 0 28px 0 12px; }
.tray-icons { display: flex; gap: 8px; }
.tray-icons svg { width: 22px; height: 22px; fill: none; stroke: #111; stroke-width: 1.300; }
.stack { display: flex; flex-direction: column; margin-left: 20px; font-size: 14px; line-height: 22px; text-align: center; }
.stack.lang { margin-left: 11px; }
.note { margin-left: 27px; fill: none; stroke: #111; stroke-width: 1.500; }
```
